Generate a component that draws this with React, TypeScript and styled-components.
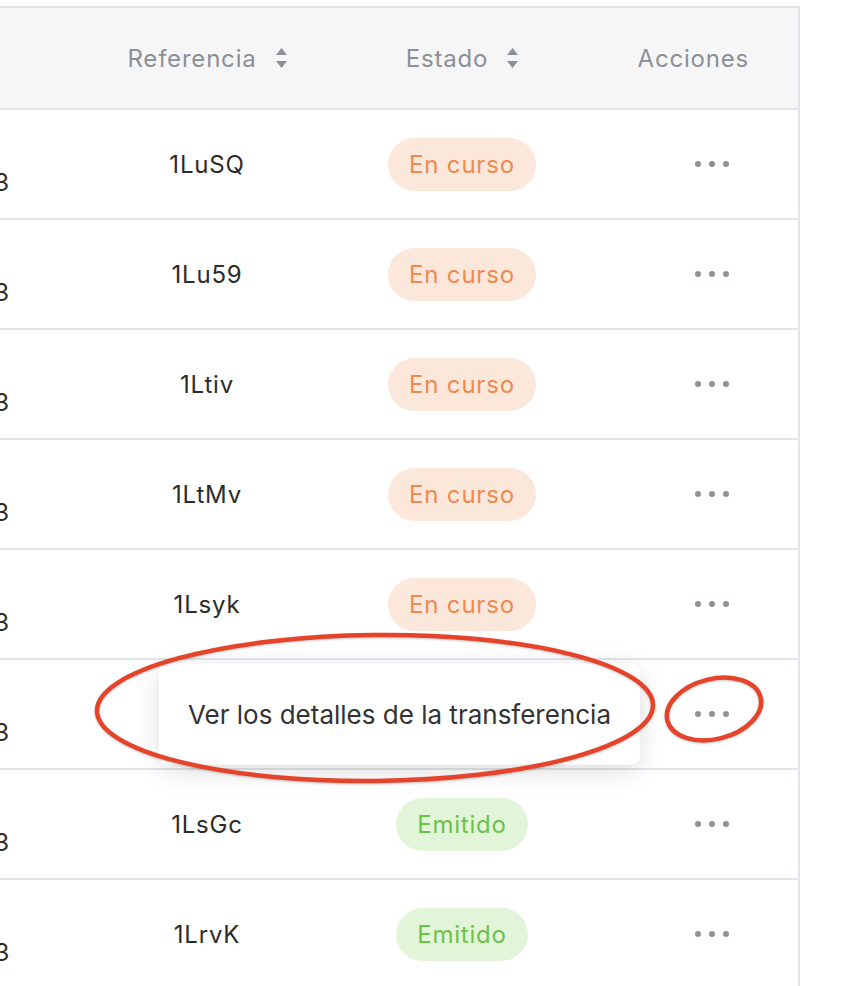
import React from 'react';
import styled, { createGlobalStyle } from 'styled-components';

const GlobalStyle = createGlobalStyle`
  html, body {
    margin: 0;
    padding: 0;
    background: #ffffff;
    overflow: hidden;
  }
  body {
    font-family: Inter, "Noto Sans", "Liberation Sans", sans-serif;
    -webkit-font-smoothing: antialiased;
  }
`;

const Page = styled.div`
  position: relative;
  width: 864px;
  height: 986px;
  overflow: hidden;
  padding-top: 6px;
  box-sizing: border-box;
`;

const Table = styled.div`
  width: 920px;
  margin-left: -120px;
  border-top: 2px solid #e1e4e8;
  border-right: 2px solid #e1e4e8;
  box-sizing: border-box;
`;

const HeaderRow = styled.div`
  display: grid;
  grid-template-columns: 220px 214px 296px 1fr;
  height: 102px;
  background: #f6f6f6;
  border-bottom: 2px solid #e1e4e8;
  box-sizing: border-box;
`;

const Row = styled.div`
  display: grid;
  grid-template-columns: 220px 214px 296px 1fr;
  height: 110px;
  border-bottom: 2px solid #e1e4e8;
  box-sizing: border-box;
  background: #ffffff;
`;

const HeadCell = styled.div<{ $align?: 'start' | 'center' | 'end' }>`
  display: flex;
  align-items: center;
  justify-content: ${(p) =>
    p.$align === 'end' ? 'flex-end' : p.$align === 'start' ? 'flex-start' : 'center'};
  padding: ${(p) => (p.$align === 'end' ? '0 49px 0 0' : p.$align === 'start' ? '0 0 0 8px' : '0')};
  gap: 19px;
  color: #8b9098;
  font-size: 24px;
  letter-spacing: 0.8px;
`;

const Cell = styled.div<{ $covered?: boolean }>`
  display: flex;
  align-items: center;
  justify-content: center;
  color: #2b2b2b;
  font-size: 24px;
  letter-spacing: 0.8px;
  visibility: ${(p) => (p.$covered ? 'hidden' : 'visible')};
`;

const DateCell = styled(Cell)`
  justify-content: flex-end;
  padding-right: 90px;
`;

const DateStack = styled.div`
  display: flex;
  flex-direction: column;
  align-items: flex-start;
  line-height: 37px;
`;

const ActionCell = styled(Cell)`
  justify-content: flex-end;
  padding-right: 58px;
  position: relative;
`;

const Badge = styled.span<{ $tone: 'progress' | 'done' }>`
  display: inline-flex;
  align-items: center;
  height: 53px;
  padding: 0 21px;
  border-radius: 27px;
  font-size: 24px;
  letter-spacing: 0.8px;
  background: ${(p) => (p.$tone === 'progress' ? '#fce7db' : '#e3f5d9')};
  color: ${(p) => (p.$tone === 'progress' ? '#ee8a4d' : '#6bc24a')};
`;

const MenuButton = styled.button`
  position: relative;
  display: flex;
  align-items: center;
  justify-content: center;
  gap: 8px;
  width: 56px;
  height: 40px;
  padding: 0;
  border: none;
  background: transparent;
  cursor: pointer;
`;

const Dot = styled.span`
  width: 6px;
  height: 6px;
  border-radius: 50%;
  background: #8d9299;
`;

const Popover = styled.div`
  position: absolute;
  right: calc(100% + 44px);
  top: 50%;
  transform: translateY(-50%);
  display: flex;
  align-items: center;
  height: 101px;
  padding: 0 29px;
  background: #ffffff;
  border-radius: 8px;
  box-shadow: 0 6px 26px rgba(0, 0, 0, 0.13);
  white-space: nowrap;
  color: #333333;
  font-family: Inter, "Noto Sans", "Liberation Sans", sans-serif;
  font-size: 26px;
  letter-spacing: 0;
  z-index: 3;
`;

const Annotation = styled.svg`
  position: absolute;
  top: 0;
  left: 0;
  width: 864px;
  height: 986px;
  pointer-events: none;
  z-index: 5;
  filter: drop-shadow(0 1px 1px rgba(0, 0, 0, 0.22));
`;

const SortIcon = () => (
  <svg width="11" height="20" viewBox="0 0 11 20">
    <path d="M5.5 0 L11 7 L0 7 Z" fill="#8b9098" />
    <path d="M0 13 L11 13 L5.5 20 Z" fill="#8b9098" />
  </svg>
);

type Item = { time: string; date: string; ref: string; status: 'progress' | 'done'; open?: boolean };

const rows: Item[] = [
  { time: '14:32', date: '23/11/2023', ref: '1LuSQ', status: 'progress' },
  { time: '13:05', date: '23/11/2023', ref: '1Lu59', status: 'progress' },
  { time: '11:47', date: '22/11/2023', ref: '1Ltiv', status: 'progress' },
  { time: '10:18', date: '22/11/2023', ref: '1LtMv', status: 'progress' },
  { time: '17:56', date: '21/11/2023', ref: '1Lsyk', status: 'progress' },
  { time: '16:09', date: '21/11/2023', ref: '1LsQ2', status: 'progress', open: true },
  { time: '09:41', date: '20/11/2023', ref: '1LsGc', status: 'done' },
  { time: '15:22', date: '19/11/2023', ref: '1LrvK', status: 'done' },
];

const App: React.FC = () => {
  return (
    <Page>
      <GlobalStyle />
      <Table>
        <HeaderRow>
          <HeadCell $align="start">Fecha</HeadCell>
          <HeadCell>
            Referencia
            <SortIcon />
          </HeadCell>
          <HeadCell>
            Estado
            <SortIcon />
          </HeadCell>
          <HeadCell $align="end">Acciones</HeadCell>
        </HeaderRow>
        {rows.map((r) => (
          <Row key={r.ref}>
            <DateCell>
              <DateStack>
                <span>{r.time}</span>
                <span>{r.date}</span>
              </DateStack>
            </DateCell>
            <Cell $covered={r.open}>{r.ref}</Cell>
            <Cell $covered={r.open}>
              <Badge $tone={r.status}>{r.status === 'progress' ? 'En curso' : 'Emitido'}</Badge>
            </Cell>
            <ActionCell>
              <MenuButton aria-label="Acciones">
                <Dot />
                <Dot />
                <Dot />
                {r.open && <Popover>Ver los detalles de la transferencia</Popover>}
              </MenuButton>
            </ActionCell>
          </Row>
        ))}
      </Table>
      <Annotation viewBox="0 0 864 986">
        <ellipse
          cx="375"
          cy="708"
          rx="278"
          ry="73"
          fill="none"
          stroke="#e5432a"
          strokeWidth="4.5"
          transform="rotate(-0.6 375 708)"
        />
        <ellipse
          cx="714"
          cy="709"
          rx="48"
          ry="30"
          fill="none"
          stroke="#e5432a"
          strokeWidth="4.5"
          transform="rotate(-14 714 709)"
        />
      </Annotation>
    </Page>
  );
};

export default App;
